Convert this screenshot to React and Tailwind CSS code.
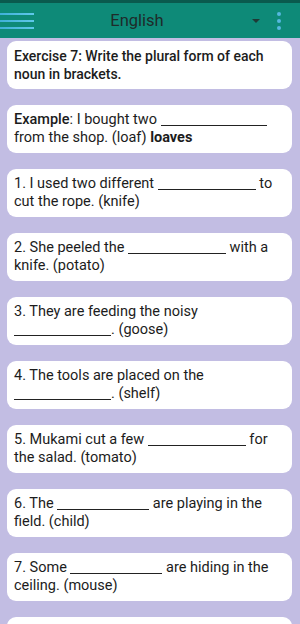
import React from "react";

const Blank = ({ w = "w-[98px]" }) => (
  <span className={"inline-block border-b border-[#222] align-[-2px] " + w} />
);

const items = [
  [<>1. I used two different <Blank /> to</>, "cut the rope. (knife)"],
  [<>2. She peeled the <Blank /> with a</>, "knife. (potato)"],
  ["3. They are feeding the noisy", <><Blank w="w-[97px]" />. (goose)</>],
  ["4. The tools are placed on the", <><Blank w="w-[97px]" />. (shelf)</>],
  [<>5. Mukami cut a few <Blank /> for</>, "the salad. (tomato)"],
  [<>6. The <Blank w="w-[92px]" /> are playing in the</>, "field. (child)"],
  [<>7. Some <Blank w="w-[92px]" /> are hiding in the</>, "ceiling. (mouse)"],
];

function Card({ children }) {
  return (
    <div className="bg-white rounded-[9px] px-[7px] py-[6px] text-[14.5px] leading-[18px] text-[#1c1c1c] whitespace-nowrap">
      {children}
    </div>
  );
}

export default function App() {
  return (
    <div
      className="w-[300px] h-[624px] overflow-hidden bg-[#c2bde3] flex flex-col"
      style={{ fontFamily: "Roboto, 'Liberation Sans', sans-serif" }}
    >
      <div className="h-[3px] bg-[#0a5a4e] shrink-0" />
      <div className="h-[35px] bg-[#0e8a78] flex items-center shrink-0">
        <div className="w-[34px] flex flex-col gap-[5px] mt-[1px]">
          <div className="h-[2px] bg-gradient-to-r from-[#3fb0d8] to-[#5fc8ea]" />
          <div className="h-[2px] bg-gradient-to-r from-[#3fb0d8] to-[#5fc8ea]" />
          <div className="h-[2px] bg-gradient-to-r from-[#3fb0d8] to-[#5fc8ea]" />
        </div>
        <div className="flex-1 text-center text-[16.5px] text-[#1e2b2a] pr-[12px] mt-[1px]">English</div>
        <svg width="8" height="5" viewBox="0 0 8 5" className="mr-[17px] mt-[1px]">
          <path d="M0 0 L8 0 L4 4 Z" fill="#1f3a36" />
        </svg>
        <div className="flex flex-col gap-[3px] mr-[19px] mt-[1px]">
          <div className="w-[4px] h-[4px] rounded-full bg-[#56b8e0]" />
          <div className="w-[4px] h-[4px] rounded-full bg-[#56b8e0]" />
          <div className="w-[4px] h-[4px] rounded-full bg-[#56b8e0]" />
        </div>
      </div>
      <div className="flex flex-col gap-[16px] pl-[7px] pr-[8px] pt-[3px]">
        <Card>
          <div className="font-medium text-[14px]">Exercise 7: Write the plural form of each</div>
          <div className="font-medium text-[14px]">noun in brackets.</div>
        </Card>
        <Card>
          <div>
            <span className="font-medium">Example</span>: I bought two <Blank w="w-[106px]" />
          </div>
          <div>
            from the shop. (loaf) <span className="font-bold">loaves</span>
          </div>
        </Card>
        {items.map((it, i) => (
          <Card key={i}>
            <div>{it[0]}</div>
            <div>{it[1]}</div>
          </Card>
        ))}
        <div className="bg-white rounded-[9px] h-[48px]" />
      </div>
    </div>
  );
}
